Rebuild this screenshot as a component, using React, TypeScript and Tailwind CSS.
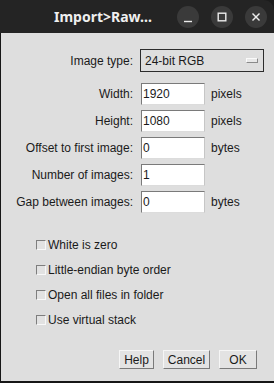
import React from 'react'

const fields = [
  { label: 'Width:', value: '1920', unit: 'pixels' },
  { label: 'Height:', value: '1080', unit: 'pixels' },
  { label: 'Offset to first image:', value: '0', unit: 'bytes' },
  { label: 'Number of images:', value: '1', unit: '' },
  { label: 'Gap between images:', value: '0', unit: 'bytes' },
]

const options = ['White is zero', 'Little-endian byte order', 'Open all files in folder', 'Use virtual stack']

function WinButton ({ children }: { children: React.ReactNode }) {
  return (
    <div className="w-[22px] h-[22px] rounded-full bg-[#3a3a3a] flex items-center justify-center">
      <svg width="22" height="22" viewBox="0 0 22 22" fill="none" stroke="#ececec" strokeWidth="1.4">
        {children}
      </svg>
    </div>
  )
}

function DialogButton ({ label, width }: { label: string, width: string }) {
  return (
    <button className={`${width} h-[19px] flex items-center justify-center bg-[#e3e3e3] border border-t-[#f6f6f6] border-l-[#f6f6f6] border-r-[#7a7a7a] border-b-[#7a7a7a] text-[12px] text-[#1a1a1a] leading-none`}>
      {label}
    </button>
  )
}

export default function App () {
  return (
    <div className="w-[274px] h-[383px] bg-[#1c1c1c] overflow-hidden font-['Liberation_Sans',sans-serif]">
      {/* title bar */}
      <div className="h-[33px] bg-[#242424] rounded-tr-[10px] flex items-center">
        <span className="pl-[54px] font-['Noto_Sans',sans-serif] font-bold text-[14px] text-[#efefef]">
          Import&gt;Raw...
        </span>
        <div className="ml-auto flex gap-[12px] pr-[7px]">
          <WinButton>
            <line x1="7" y1="15.5" x2="15" y2="15.5" />
          </WinButton>
          <WinButton>
            <rect x="7.2" y="7.2" width="7.6" height="7.6" />
          </WinButton>
          <WinButton>
            <line x1="7.5" y1="7.5" x2="14.5" y2="14.5" />
            <line x1="14.5" y1="7.5" x2="7.5" y2="14.5" />
          </WinButton>
        </div>
      </div>

      {/* body */}
      <div className="h-[350px] bg-[#dedede] border-l border-b-2 border-[#161616] pt-[16px] text-[12px] text-[#1a1a1a]">
        <div className="flex items-center h-[23px]">
          <span className="w-[132px] text-right">Image type:</span>
          <div className="ml-[7px] w-[124px] h-[23px] border border-[#2c2c2c] flex items-center pl-[4px] pr-[5px]">
            <span>24-bit RGB</span>
            <div className="ml-auto w-[12px] h-[5px] bg-[#e8e8e8] border border-t-[#fafafa] border-l-[#fafafa] border-r-[#8a8a8a] border-b-[#8a8a8a]" />
          </div>
        </div>

        <div className="mt-[11px] flex flex-col gap-[5px]">
          {fields.map((f) => (
            <div key={f.label} className="flex items-center h-[22px]">
              <span className="w-[132px] text-right">{f.label}</span>
              <div className="ml-[8px] w-[64px] h-[22px] bg-white border border-t-[#7a7a7a] border-l-[#7a7a7a] border-r-[#c6c6c6] border-b-[#dcdcdc] flex items-center pl-[1px]">
                {f.value}
              </div>
              {f.unit && <span className="ml-[6px]">{f.unit}</span>}
            </div>
          ))}
        </div>

        <div className="mt-[19px] pl-[35px] flex flex-col">
          {options.map((o) => (
            <div key={o} className="h-[25px] flex items-center">
              <div className="w-[10px] h-[10px] bg-[#e2e2e2] border border-t-[#7e7e7e] border-l-[#7e7e7e] border-r-[#f8f8f8] border-b-[#f8f8f8]" />
              <span className="ml-[2px]">{o}</span>
            </div>
          ))}
        </div>

        <div className="mt-[18px] flex justify-end gap-[9px] pr-[17px]">
          <DialogButton label="Help" width="w-[35px]" />
          <DialogButton label="Cancel" width="w-[47px]" />
          <DialogButton label="OK" width="w-[38px]" />
        </div>
      </div>
    </div>
  )
}
